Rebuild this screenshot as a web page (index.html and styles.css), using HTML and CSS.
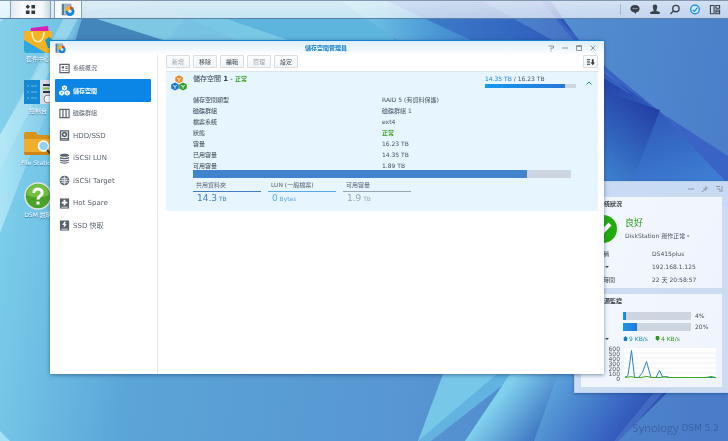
FILE: index.html
```html
<!DOCTYPE html>
<html lang="zh-Hant">
<head>
<meta charset="utf-8">
<meta name="viewport" content="width=device-width, initial-scale=1">
<title>儲存空間管理員</title>
<link rel="stylesheet" href="styles.css">
</head>
<body>
<svg class="defs" aria-hidden="true">
  <symbol id="i-disk" viewBox="0 0 14 14">
    <path fill="#b9c3cc" stroke="#6d7d8a" stroke-width=".5" d="M1 1h9v11H1z"/><path fill="#5e7e98" d="M1 1h2v11H1z"/><path stroke="#7b8b98" stroke-width=".7" d="M3.500 3h6M3.500 5h6"/>
    <circle cx="9" cy="8.500" r="4.500" fill="#1d84dc"/><path fill="#f7b51f" d="M9 8.500V3.200a5 5 0 0 0-5 4.300z"/><path fill="#e2482b" d="M9 3.200a5 5 0 0 1 3.500 1.600L9 8z"/><circle cx="9" cy="8.300" r="1.700" fill="#d8ecfa"/>
  </symbol>
  <symbol id="i-boxes" viewBox="0 0 16 16">
    <path class="box-a" d="M8 .3l3.700 1.900v4L8 8.200 4.300 6.200v-4z"/><path class="box-b" d="M4 7.600l3.800 1.800v4L4 15.500.2 13.400v-4z"/><path class="box-c" d="M12 7.600l3.800 1.800v4L12 15.500l-3.800-2.100v-4z"/>
    <path class="box-line" fill="none" stroke-width=".8" d="M6 3.200l2 1 2-1M8 4.200v2.300M2 10.400l2 1 2-1M4 11.400v2.300M10 10.400l2 1 2-1M12 11.400v2.300"/>
  </symbol>
</svg>

<svg class="wallpaper" viewBox="0 0 728 441" preserveAspectRatio="none" aria-hidden="true">
  <defs>
    <linearGradient id="base" x1="0" y1=".4" x2="1" y2=".5"><stop offset="0" stop-color="#7dd0ec"/><stop offset=".22" stop-color="#5ba5d8"/><stop offset=".6" stop-color="#5796d2"/><stop offset="1" stop-color="#4a7dc9"/></linearGradient>
    <linearGradient id="ray" x1="0" y1="0" x2="1" y2="0"><stop offset="0" stop-color="#a9e4f5"/><stop offset="1" stop-color="#64b6de"/></linearGradient>
    <linearGradient id="band" x1="0" y1="0" x2="1" y2="0"><stop offset="0" stop-color="#7bd0ec"/><stop offset=".4" stop-color="#4b97d4"/><stop offset="1" stop-color="#2a4db4"/></linearGradient>
    <linearGradient id="deep" x1=".9" y1="0" x2=".2" y2="1"><stop offset="0" stop-color="#2036a0"/><stop offset="1" stop-color="#4391d9"/></linearGradient>
    <linearGradient id="deep2" x1="0" y1="0" x2=".3" y2="1"><stop offset="0" stop-color="#2440a8"/><stop offset="1" stop-color="#3e7fd3"/></linearGradient>
    <linearGradient id="low" x1="0" y1="0" x2="1" y2=".5"><stop offset="0" stop-color="#88d7ee"/><stop offset=".4" stop-color="#80d0ed"/><stop offset="1" stop-color="#3469bd"/></linearGradient>
    <linearGradient id="low2" x1="0" y1=".2" x2="1" y2=".5"><stop offset="0" stop-color="#63b0e0"/><stop offset=".6" stop-color="#3865c1"/><stop offset="1" stop-color="#2438a2"/></linearGradient>
  </defs>
  <path fill="url(#base)" d="M0 0h728v441H0z"/>
  <path fill="url(#ray)" d="M0 0h90L0 233z"/>
  <path fill="#6cc3e3" opacity=".6" d="M0 22L30 0h50L0 135z"/>
  <path fill="#bdebf7" opacity=".45" d="M64 18h14L40 90 0 170v-35z"/>
  <path fill="#6cb3d9" d="M82 10h110L165 42H72z"/>
  <path fill="#4386bb" d="M82 18h12l75 24H75z"/>
  <path fill="#5db4dd" d="M150 0h230l15 42H240z"/>
  <path fill="#8bd5eb" opacity=".6" d="M94 18h130l70 24H170z"/>
  <path fill="url(#band)" d="M340 0h210l30 42H400z"/>
  <path fill="#2f60be" opacity=".55" d="M385 0h100l68 42H475z"/>
  <path fill="#5f95d6" opacity=".5" d="M480 0h60l38 40h-26z"/>
  <path fill="#3a63c6" d="M540 0l69 70 51 42 68 44v50H590V60z"/>
  <path fill="url(#deep2)" d="M600 70l60 42 68 72v20H600z"/>
  <path fill="url(#deep)" d="M600 90l60 20-31 80h-60z"/>
  <path fill="#3f7bcf" opacity=".5" d="M600 66l34 31 26 15-60-36z"/>
  <path fill="#77c7e8" d="M443 374h75L420 441h-2z"/>
  <path fill="#62b3df" d="M497 374h20L431 441h-13z"/>
  <path fill="url(#low)" d="M510 374h60l-35 67h-70z"/>
  <path fill="url(#low2)" d="M558 374l132-4-72 71h-84z"/>
  <path fill="#4f79cc" opacity=".6" d="M660 385h10l-50 56h-6z"/>
  <path fill="#a5e1f4" d="M0 431l10 10H0z"/>
</svg>

<header class="taskbar">
  <button class="task task-menu" aria-label="主選單"><svg viewBox="0 0 12 12"><path fill="#333a42" d="M3 .5L5.500 3 3 5.500.5 3zM7 1h4v4H7zM1 7h4v4H1zM7 7h4v4H7z"/></svg></button>
  <button class="task task-app" aria-label="儲存空間管理員"><svg viewBox="0 0 14 14"><use href="#i-disk"/></svg></button>
  <nav class="tray">
    <button aria-label="通知"><svg viewBox="0 0 12 12"><path fill="#39424c" d="M6 1c3 0 5 1.700 5 4S9.500 9 7.500 9L6.500 11 5 9C2.500 9 1 7.200 1 5s2-4 5-4z"/><path stroke="#dbe6f5" stroke-dasharray="1 1" d="M3.500 5h5"/></svg></button>
    <button aria-label="使用者"><svg viewBox="0 0 12 12"><path fill="#39424c" d="M6 .5c1.800 0 2.600 1.200 2.400 3C8.300 5 7.500 6 7.500 7.500l3.700 1.300V11H.8V8.800l3.700-1.300C4.500 6 3.700 5 3.600 3.500 3.400 1.700 4.200.5 6 .5z"/></svg></button>
    <button aria-label="搜尋"><svg viewBox="0 0 12 12" fill="none" stroke="#39424c" stroke-width="1.500"><circle cx="7" cy="5" r="3.500"/><path d="M4.500 7.500L1 11"/></svg></button>
    <button aria-label="小工具"><svg viewBox="0 0 12 12"><circle cx="6" cy="6" r="4.700" fill="#d5ecff" stroke="#1687e0" stroke-width="1.400"/><path fill="none" stroke="#1687e0" stroke-width="1.300" d="M3.500 6.500L5.500 8l3-4"/></svg></button>
    <button aria-label="檢視"><svg viewBox="0 0 12 12" fill="none" stroke="#39424c" stroke-width="1.200"><path d="M1 1.600h4v9H1zM7 1.600h4v3H7zM7 6.600h4v4H7zM7 8.500h4"/></svg></button>
  </nav>
</header>

<main class="desktop">
  <ul class="shortcuts">
    <li><a href="#"><svg viewBox="0 0 28 28"><path fill="#d91fb5" d="M7 2l17-2 1 8H6z"/><path fill="#f4b321" d="M0 5h28v19a3 3 0 0 1-3 3H3a3 3 0 0 1-3-3z"/><path fill="#2ea8e0" d="M0 14l22 13H3a3 3 0 0 1-3-3z"/><path fill="none" stroke="#fff6c8" stroke-width="1.500" d="M8 6c0 13 12 13 12 0"/><path fill="#1c9fd0" d="M21 14l4-3 4 3v8h-5z"/></svg><span>套件中心</span></a></li>
    <li><a href="#"><svg viewBox="0 0 28 28"><rect y="2" width="28" height="24" rx="1" fill="#d7dde2"/><path fill="#1787cf" d="M0 2h16v24H0z"/><path stroke="#5fc0f0" d="M3 8h2M7 8h6M3 14h2M7 14h6M3 20h2M7 20h6"/><path stroke="#2a323a" stroke-width="2" d="M19 7h8M19 14h8"/><path stroke="#7ac331" stroke-width="2" d="M19 10.500h6"/><circle cx="24" cy="21" r="4" fill="#fff" stroke="#888"/></svg><span>控制台</span></a></li>
    <li><a href="#"><svg viewBox="0 0 28 28"><path fill="#d9921b" d="M0 4a2 2 0 0 1 2-2h10l2 3h14v7H0z"/><path fill="#f1ad2d" d="M0 9h28v14a2 2 0 0 1-2 2H2a2 2 0 0 1-2-2z"/><path fill="#cf8515" d="M0 22h28v1a2 2 0 0 1-2 2H2a2 2 0 0 1-2-2z"/><circle cx="19.500" cy="16" r="5" fill="#8fd4f7" stroke="#fff" stroke-width="1.500"/><path stroke="#35414c" stroke-width="2" d="M23 20l4 4"/></svg><span>File Station</span></a></li>
    <li><a href="#"><svg viewBox="0 0 28 28"><circle cx="14" cy="14" r="13" fill="#4aa327" stroke="#dfe6dd" stroke-width="1.500"/><path fill="#74c043" d="M3 13a11 11 0 0 1 22 0c-6 3-16 3-22 0z"/><path fill="none" stroke="#fff" stroke-width="3" d="M9.800 11c0-5.500 8.700-5 8.400 0-.2 3-4.200 2.800-4.200 6.500"/><circle cx="14" cy="21" r="1.800" fill="#fff"/></svg><span>DSM 說明</span></a></li>
  </ul>

  <aside class="widgets">
    <div class="widget-bar">
      <button aria-label="縮小"><svg viewBox="0 0 8 8"><path d="M1 4h6"/></svg></button>
      <button aria-label="釘選"><svg viewBox="0 0 8 8"><path d="M4.500 1l2.500 2.500M5.500 2L3.500 4M6 3L4.500 5M2.500 3.500L5 6M3.500 4.700L1 7"/></svg></button>
      <button aria-label="停靠"><svg viewBox="0 0 8 8"><path d="M1 1.500h4M2 4h3v3M7 1v6"/></svg></button>
    </div>
    <section class="widget">
      <h2>系統狀況</h2>
      <div class="health">
        <svg viewBox="0 0 28 28"><circle cx="14" cy="14" r="14" fill="#22ac0c"/><path fill="none" stroke="#fff" stroke-width="4" d="M6 14l5 5.500L21 9"/></svg>
        <div><strong>良好</strong><p>DiskStation 運作正常。</p></div>
      </div>
      <dl class="facts">
        <dt>設備名稱</dt><dd>DS415plus</dd>
        <dt>LAN 1 <i class="caret"></i></dt><dd>192.168.1.125</dd>
        <dt>已運作時間</dt><dd>22 天 20:58:57</dd>
      </dl>
    </section>
    <section class="widget">
      <h2>資源監控</h2>
      <div class="usage">
        <span>CPU</span><div class="meter"><b style="width:4%"></b></div><span>4%</span>
        <span>RAM</span><div class="meter"><b style="width:20%"></b></div><span>20%</span>
      </div>
      <div class="network">
        <span class="lan">LAN 1 <i class="caret"></i></span>
        <span class="up"><svg viewBox="0 0 6 6"><path d="M3 0l3 3H5v3H1V3H0z"/></svg>9 KB/s</span>
        <span class="down"><svg viewBox="0 0 6 6"><path d="M3 6l3-3H5V0H1v3H0z"/></svg>4 KB/s</span>
      </div>
      <div class="chart">
        <div class="axis"><span>600</span><span>500</span><span>400</span><span>300</span><span>200</span><span>100</span><span>0</span></div>
        <svg viewBox="0 0 92 30" preserveAspectRatio="none"><path fill="#fff" d="M0 0h92v30H0z"/><path stroke="#e4e8ee" stroke-width=".7" d="M0 5h92M0 10h92M0 15h92M0 20h92M0 25h92"/><path fill="none" stroke="#2c83bd" d="M1 29.500l3-2 3.500-25 3 27h4l4-5 4-11 4.500 16h5l3.500-7 3 6.500 4-.5 3 1h46"/><path fill="none" stroke="#3aa91a" d="M1 29.500l6-.8 5 .8h4l7-1 5 1h8l4-.7 4 .7h38l5-1 5 1"/></svg>
      </div>
    </section>
  </aside>

  <section class="window">
    <header class="titlebar">
      <svg viewBox="0 0 14 14"><use href="#i-disk"/></svg>
      <h1>儲存空間管理員</h1>
      <div class="controls">
        <button aria-label="說明"><svg viewBox="0 0 8 8"><path d="M1.500 2h5v2H4v1.500M4 6.500v1"/></svg></button>
        <button aria-label="最小化"><svg viewBox="0 0 8 8"><path d="M1 4h6"/></svg></button>
        <button aria-label="最大化"><svg viewBox="0 0 8 8"><path d="M1.500 1.500h5v5h-5zM1.500 2.500h5"/></svg></button>
        <button aria-label="關閉"><svg viewBox="0 0 8 8"><path d="M1.500 1.500l5 5M6.500 1.500l-5 5"/></svg></button>
      </div>
    </header>
    <div class="body">
      <nav class="sidebar">
        <a href="#"><svg viewBox="0 0 12 12"><path fill="none" stroke="#59626d" stroke-width="1.300" d="M1 1.500h10v9H1z"/><path fill="#59626d" d="M3 3.500h2.500V6H3zM7 3.500h2.500v1H7zM7 5.500h2.500v1H7zM3 7.500h3v1H3zM7 7.500h2.500v1H7z"/></svg>系統概況</a>
        <a href="#" class="active" aria-current="page"><svg class="boxes-light" viewBox="0 0 16 16"><use href="#i-boxes"/></svg>儲存空間</a>
        <a href="#"><svg viewBox="0 0 12 12" fill="none" stroke="#59626d" stroke-width="1.300"><path d="M1 1.500h10v9H1zM4.300 1.500v9M7.700 1.500v9"/></svg>磁碟群組</a>
        <a href="#" class="latin"><svg viewBox="0 0 12 12"><path fill="none" stroke="#59626d" stroke-width="1.500" d="M1.700 1h8.600v10H1.700z"/><circle cx="6" cy="5" r="3" fill="#59626d"/><circle cx="6" cy="5" r="1.200" fill="#fff"/><path fill="#59626d" d="M2 8.800h8V10H2z"/></svg>HDD/SSD</a>
        <a href="#" class="latin"><svg viewBox="0 0 12 12" fill="#59626d"><path d="M1 2.500C1 .3 11 .3 11 2.500S1 4.700 1 2.500zM1 4.200c2 1.500 8 1.500 10 0v1.500c-2 1.500-8 1.500-10 0zM1 6.700c2 1.500 8 1.500 10 0v1.500c-2 1.500-8 1.500-10 0zM1 9.200c2 1.500 8 1.500 10 0v1c-2 2-8 2-10 0z"/></svg>iSCSI LUN</a>
        <a href="#" class="latin"><svg viewBox="0 0 12 12"><circle cx="6" cy="6" r="5.300" fill="#59626d"/><path fill="none" stroke="#fff" stroke-width=".7" d="M2 4h8M1 6h10M2 8h8M6 1.500v9M6 2C3.500 4 3.500 8 6 10c2.500-2 2.500-6 0-8"/></svg>iSCSI Target</a>
        <a href="#" class="latin"><svg viewBox="0 0 12 12"><path fill="#59626d" d="M1 .5h10v11H1z"/><path fill="#fff" d="M5 2h2v2h2v2H7v2H5V6H3V4h2zM2.500 9.500h7v.8h-7z"/></svg>Hot Spare</a>
        <a href="#" class="latin"><svg viewBox="0 0 12 12"><path fill="#59626d" d="M1 .5h10v11H1z"/><path fill="#fff" d="M6 1.500L3.500 5.500h2L5 8.500l3.500-4h-2L7.500 2zM2.500 9.500h7v.8h-7z"/></svg>SSD 快取</a>
      </nav>
      <div class="content">
        <div class="toolbar">
          <button class="btn" disabled>新增</button>
          <button class="btn">移除</button>
          <button class="btn">編輯</button>
          <button class="btn" disabled>管理</button>
          <button class="btn">設定</button>
          <button class="btn sort" aria-label="排序"><svg viewBox="0 0 10 8"><path fill="none" stroke="#353c44" stroke-width="1.200" d="M1 1.500h3.500M1 4h3.500M1 6.500h3.500"/><path fill="#353c44" d="M6.500 1h2v3.500H10L7.500 7.500 5 4.500h1.500z"/></svg></button>
        </div>
        <article class="volume">
          <header class="volume-head">
            <svg class="boxes-color" viewBox="0 0 16 16"><use href="#i-boxes"/></svg>
            <h2>儲存空間 <b>1</b> <small>- 正常</small></h2>
            <div class="quota">
              <p><em>14.35 TB</em> / 16.23 TB</p>
              <div class="quota-bar"><b style="width:88%"></b></div>
            </div>
            <button class="fold" aria-label="收合"><svg viewBox="0 0 8 8"><path d="M1.500 5.500L4 3l2.500 2.500"/></svg></button>
          </header>
          <div class="volume-body">
            <dl class="details">
              <dt>儲存空間類型</dt><dd>RAID 5 (有資料保護)</dd>
              <dt>磁碟群組</dt><dd>磁碟群組 1</dd>
              <dt>檔案系統</dt><dd>ext4</dd>
              <dt>狀態</dt><dd class="ok">正常</dd>
              <dt>容量</dt><dd>16.23 TB</dd>
              <dt>已用容量</dt><dd>14.35 TB</dd>
              <dt>可用容量</dt><dd>1.89 TB</dd>
            </dl>
            <div class="capacity"><b style="width:88.4%"></b></div>
            <ul class="legend">
              <li class="shared"><span>共用資料夾</span><p>14.3 <small>TB</small></p></li>
              <li class="lun"><span>LUN (一般檔案)</span><p>0 <small>Bytes</small></p></li>
              <li class="free"><span>可用容量</span><p>1.9 <small>TB</small></p></li>
            </ul>
          </div>
        </article>
      </div>
    </div>
  </section>

  <footer class="brand">Synology<span>DSM 5.2</span></footer>
</main>
</body>
</html>
```
FILE: styles.css
```css
* { box-sizing: border-box; margin: 0; padding: 0; }

body {
  display: flex;
  flex-direction: column;
  min-height: 100vh;
  overflow: hidden;
  background: #5a9fd6;
  color: #4a525b;
  font: 6px/8px "DejaVu Sans", "Noto Sans CJK TC", sans-serif;
}

button { border: 0; background: none; font: inherit; color: inherit; }
a { color: inherit; text-decoration: none; }
ul { list-style: none; }
svg { display: block; flex: none; }
h1, h2 { font-size: 6px; }
em { font-style: normal; }
.defs { position: absolute; width: 0; height: 0; }
.wallpaper { position: fixed; inset: 0; z-index: -1; width: 100%; height: 100%; }

/* Taskbar */
.taskbar {
  display: flex;
  height: 19px;
  padding-left: 10px;
  background: linear-gradient(#ffffffc0, #ffffffa8);
  border-top: 1px solid #8197ad;
  border-bottom: 1px solid #5f7fa4;
}
.task {
  display: flex;
  align-items: center;
  justify-content: center;
  border: solid #8aa0b4;
  border-width: 0 1px;
  background: linear-gradient(90deg, #dfeaf2, #fafcff 30%, #f4f8fc 80%, #c9d7e1);
}
.task-menu { width: 41px; margin-right: 3px; }
.task-menu svg { width: 11px; height: 11px; }
.task-app { width: 28px; background: #f6fafd; }
.task-app svg { width: 14px; height: 14px; }
.tray {
  display: flex;
  align-items: center;
  gap: 8px;
  margin: 3px 7px 3px auto;
  padding-left: 8px;
  border-left: 1px solid #a3b5cf;
}
.tray svg { width: 12px; height: 11px; }

/* Desktop */
.desktop { position: relative; flex: 1; }
.shortcuts { display: grid; grid-auto-rows: 52px; width: 76px; padding-top: 7px; }
.shortcuts a { display: flex; flex-direction: column; align-items: center; gap: 1px; color: #fff; white-space: nowrap; text-shadow: 0 1px 1px #2a6c98; }
.shortcuts svg { width: 28px; height: 28px; }
.brand {
  position: absolute;
  right: 9px;
  bottom: 7px;
  display: flex;
  align-items: center;
  gap: 3px;
  color: #3a62a4;
  font: 11px/12px "Open Sans", sans-serif;
}
.brand span { font: 9px/12px "DejaVu Sans", sans-serif; }

/* Storage window */
.window {
  position: absolute;
  inset: 21px 124px 67px 50px;
  display: flex;
  flex-direction: column;
  border-top: 1px solid #1580d0;
  background: #fff;
  box-shadow: 0 1px 4px #123a6a90;
}
.titlebar {
  display: grid;
  grid-template-columns: 1fr auto 1fr;
  align-items: center;
  height: 14px;
  padding: 0 7px 0 5px;
  background: linear-gradient(#dceefb, #fff);
}
.titlebar > svg { width: 11px; height: 11px; }
.titlebar h1 { color: #1381c8; }
.controls { display: flex; justify-content: flex-end; gap: 6px; }
.controls svg, .widget-bar svg { width: 8px; height: 8px; fill: none; stroke: #8b96a1; }
.body { display: flex; flex: 1; }

.sidebar {
  display: flex;
  flex: none;
  flex-direction: column;
  width: 108px;
  padding: 2px 6px 0 5px;
  border-right: 1px solid #e5e8eb;
}
.sidebar a { display: flex; align-items: center; gap: 3px; height: 22px; padding-left: 4px; border-radius: 1px; color: #59626d; }
.sidebar a:nth-child(even) { height: 23px; }
.sidebar svg { width: 11px; height: 11px; }
.sidebar .latin { font-size: 7px; }
.sidebar .active { background: #0c86e6; color: #fff; font-weight: bold; }

.content { flex: 1; padding: 0 6px 0 8px; }
.toolbar { display: flex; gap: 3px; padding-bottom: 3px; }
.btn {
  width: 24px;
  height: 13px;
  border: 1px solid #d9dee3;
  border-radius: 1px;
  background: linear-gradient(#fcfdfd, #f2f5f7);
  color: #414a54;
}
.btn:disabled { color: #9aa2aa; }
.sort { display: flex; align-items: center; justify-content: center; width: 15px; margin-left: auto; }
.sort svg { width: 9px; height: 8px; }

/* Volume card */
.volume { padding: 3px 5px 6px; border-top: 1px solid #dbe6ee; background: #e6f5ff; }
.volume-head { display: flex; align-items: flex-start; }
.volume-head > svg { width: 16px; height: 16px; }
.volume-head h2 { margin-left: 6px; font-size: 7px; font-weight: normal; color: #37414b; }
.volume-head small { font-size: 6px; font-weight: bold; color: #43a22c; }
.quota { width: 91px; margin-left: auto; }
.quota p { white-space: nowrap; }
.quota em { color: #1587d4; }
.quota-bar, .capacity, .meter { background: #ccd5e0; }
.quota-bar b, .capacity b, .meter b { display: block; height: 100%; }
.quota-bar { height: 4px; margin-top: 1px; }
.quota-bar b, .meter b { background: linear-gradient(90deg, #1599ef, #2776d6); }
.fold { margin: 4px 0 0 9px; }
.fold svg { width: 8px; height: 8px; fill: none; stroke: #23838f; }
.volume-body { padding: 3px 22px 0; }
.details { display: grid; grid-template-columns: 1fr 1fr; line-height: 11px; }
.details dt { color: #37414b; }
.details .ok { color: #43a22c; font-weight: bold; }
.capacity { height: 8px; margin-top: -1px; }
.capacity b { background: #4084cd; }
.legend { display: grid; grid-template-columns: repeat(3, 68px); gap: 7px; margin-top: 1px; }
.legend span { display: block; padding: 1px 0 2px 3px; border-bottom: 1px solid #407fc0; line-height: 9px; color: #59626d; }
.legend p { padding-left: 4px; font-size: 9px; line-height: 13px; }
.legend small { margin-left: -1px; font-size: 6px; }
.shared p { color: #407fc0; }
.lun span { border-color: #58aae0; }
.lun p { color: #58aae0; }
.free span { border-color: #9ba5ae; }
.free p { color: #9ba5ae; }

.boxes-color { --a: #f08a24; --b: #1678d3; --c: #35a127; --line: #fff; }
.boxes-light { --a: #fff; --b: #fff; --c: #fff; --line: #0c86e6; }
.box-a { fill: var(--a); }
.box-b { fill: var(--b); }
.box-c { fill: var(--c); }
.box-line { stroke: var(--line); }

/* Widgets */
.widgets {
  position: absolute;
  top: 162px;
  right: 0;
  width: 154px;
  padding: 0 5px 4px;
  border: 1px solid #b9cfeb;
  border-right: 0;
  background: #e2ecfad8;
  box-shadow: 0 1px 3px #173f7480;
}
.widget-bar { display: flex; justify-content: flex-end; gap: 6px; padding: 3px 0; }
.widget { padding: 3px 6px 2px 4px; border: 1px solid #cfdcee; background: linear-gradient(120deg, #f4f9ff, #eef3fd); }
.widget + .widget { margin-top: 4px; padding-bottom: 6px; }
.widget h2 { padding-left: 13px; font-weight: bold; color: #353c44; }
.health { display: flex; gap: 8px; margin-top: 7px; padding-left: 4px; }
.health svg { width: 28px; height: 28px; }
.health strong { display: block; padding: 2px 0 3px; font-size: 9px; line-height: 12px; font-weight: normal; color: #2c9c18; }
.facts { display: grid; grid-template-columns: 67px 1fr; margin-top: 4px; line-height: 13px; }
.facts dt { color: #353c44; }
.caret { display: inline-block; margin-bottom: 1px; border: solid transparent; border-width: 2px 2px 0; border-top-color: #39424c; }
.usage { display: grid; grid-template-columns: 34px 68px 1fr; align-items: center; gap: 3px 4px; margin-top: 7px; }
.meter { height: 8px; }
.network { display: flex; margin-top: 4px; }
.lan { width: 38px; }
.network svg { display: inline-block; width: 5px; height: 5px; margin-right: 1px; fill: currentColor; }
.up { margin-right: 7px; color: #147fc6; }
.down { color: #319a1c; }
.chart { display: flex; gap: 4px; margin-top: 5px; }
.axis { width: 35px; margin-top: -2px; line-height: 5px; text-align: right; }
.axis span { display: block; }
.chart svg { flex: 1; width: 0; height: 30px; }
```
